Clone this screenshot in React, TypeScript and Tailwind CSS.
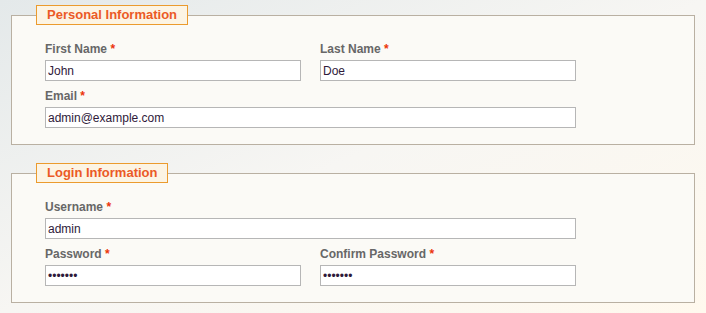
const Field = ({ label, value, type = "text", full = false }: { label: string; value: string; type?: string; full?: boolean }) => (
  <div className={full ? "col-span-2" : ""}>
    <label className="block text-[12px] leading-[15px] font-bold text-[#676767] mb-[3px] mt-[1px]">
      {label} <span className="text-[#eb340a]">*</span>
    </label>
    <input
      type={type}
      defaultValue={value}
      className="block w-full h-[21px] border border-[#b6b6b6] bg-white px-[2px] text-[12px] text-[#2f1a3a] outline-none"
    />
  </div>
);

const Section = ({ title, children }: { title: string; children: React.ReactNode }) => (
  <fieldset className="border border-[#b9b0a2] bg-[#fbfaf6] pl-[33px] pr-[118px] pt-[16px] pb-[16px]">
    <legend className="ml-[-9px] h-[20px] px-[10px] border border-[#eb9b2e] bg-[#fcf4e4] text-[13px] leading-[18px] font-bold text-[#eb5a26]">
      {title}
    </legend>
    <div className="grid grid-cols-[256px_256px] gap-x-[19px] gap-y-[7px]">{children}</div>
  </fieldset>
);

export default function App() {
  return (
    <div
      className="w-[706px] h-[313px] px-[11px] pt-[5px] bg-gradient-to-br from-[#e4e9ea] via-[#f7f6f3] to-[#fff9ee] flex flex-col gap-[18px]"
      style={{ fontFamily: '"Liberation Sans", Arial, sans-serif' }}
    >
      <Section title="Personal Information">
        <Field label="First Name" value="John" />
        <Field label="Last Name" value="Doe" />
        <Field label="Email" value="admin@example.com" full />
      </Section>
      <Section title="Login Information">
        <Field label="Username" value="admin" full />
        <Field label="Password" value="1234567" type="password" />
        <Field label="Confirm Password" value="1234567" type="password" />
      </Section>
    </div>
  );
}
